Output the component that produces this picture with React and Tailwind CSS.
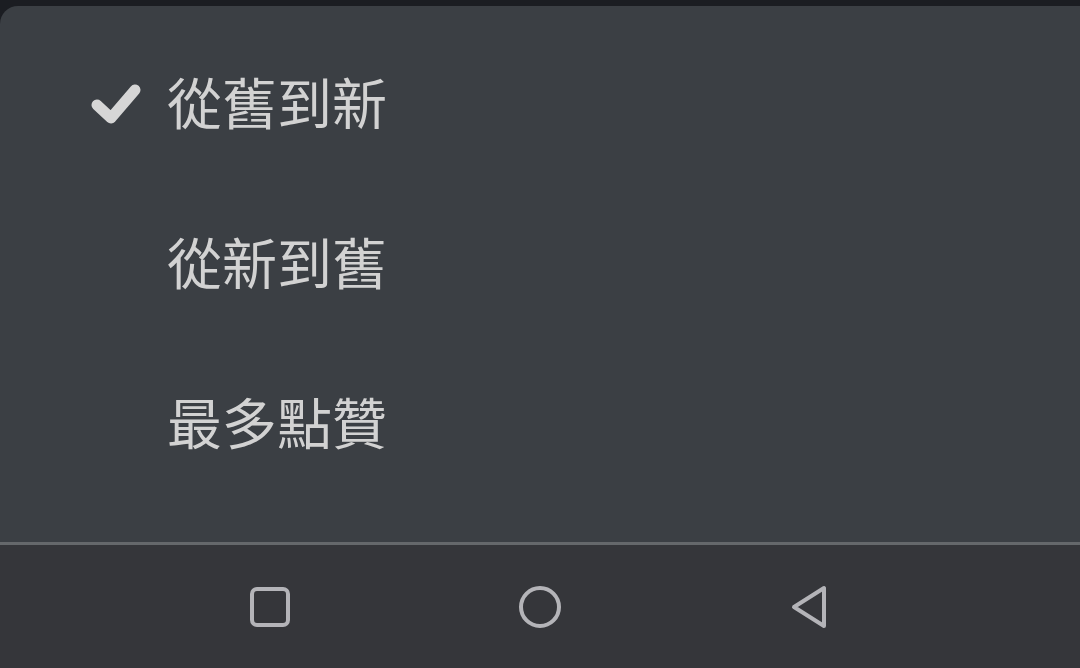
import React from "react";

const options = [
  { label: "從舊到新", checked: true },
  { label: "從新到舊", checked: false },
  { label: "最多點贊", checked: false },
];

function Check() {
  return (
    <svg width="52" height="48" viewBox="0 0 52 48">
      <polyline
        points="7,29 21,42 45,14"
        fill="none"
        stroke="#d6d6d6"
        strokeWidth="11"
        strokeLinecap="round"
        strokeLinejoin="round"
      />
    </svg>
  );
}

export default function App() {
  return (
    <div
      className="w-[1080px] h-[668px] flex flex-col bg-[#1b1d22] overflow-hidden"
      style={{ fontFamily: '"Noto Sans CJK TC", "Noto Sans", sans-serif' }}
    >
      <div className="h-[6px] shrink-0" />
      {/* Sort menu sheet */}
      <div className="h-[536px] shrink-0 bg-[#3b3f44] rounded-tl-[18px] pt-[14px]">
        {options.map((opt) => (
          <div key={opt.label} className="h-[160px] flex items-center pl-[90px]">
            <div className="w-[77px] flex items-center">{opt.checked && <Check />}</div>
            <span className="text-[55px] leading-none text-[#d2d2d2]">{opt.label}</span>
          </div>
        ))}
      </div>
      <div className="h-[3px] shrink-0 bg-[#65686b]" />
      {/* Android navigation bar */}
      <div className="flex-1 bg-[#35363a] flex items-center justify-center gap-[210px]">
        <div className="w-[60px] flex justify-center">
          <svg width="42" height="42" viewBox="0 0 42 42">
            <rect x="3" y="3" width="36" height="36" rx="5" fill="none" stroke="#b4b4b8" strokeWidth="4" />
          </svg>
        </div>
        <div className="w-[60px] flex justify-center">
          <svg width="44" height="44" viewBox="0 0 44 44">
            <circle cx="22" cy="22" r="19" fill="none" stroke="#b4b4b8" strokeWidth="4" />
          </svg>
        </div>
        <div className="w-[60px] flex justify-center">
          <svg width="42" height="46" viewBox="0 0 42 46">
            <path d="M35 4 L35 42 L5 23 Z" fill="none" stroke="#b4b4b8" strokeWidth="4" strokeLinejoin="round" />
          </svg>
        </div>
      </div>
    </div>
  );
}
